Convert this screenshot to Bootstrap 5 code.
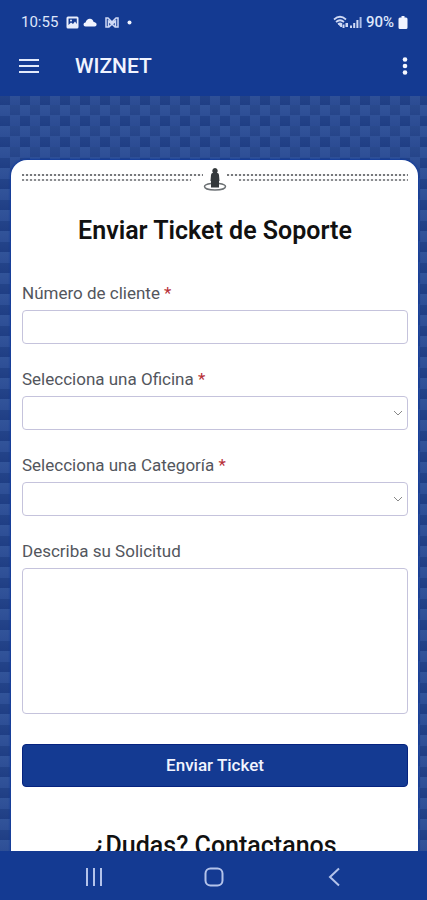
<!DOCTYPE html>
<html lang="es">
<head>
<meta charset="utf-8">
<meta name="viewport" content="width=device-width, initial-scale=1">
<title>WIZNET</title>
<link href="https://cdn.jsdelivr.net/npm/bootstrap@5.3.0/dist/css/bootstrap.min.css" rel="stylesheet">
<style>
  :root { --brand: #143a92; --line: #c5c3dc; }
  body { font-family: Roboto, "Liberation Sans", sans-serif; background: var(--brand); color: #111; }
  .status-bar { height: 44px; font-size: 15px; color: #dfe6fa; padding: 0 19px 0 21px; }
  .app-bar { height: 52px; padding: 0 19px 8px; }
  .app-title { font-size: 21px; line-height: 28px; font-weight: 500; color: #f1f4ff; }
  .weave {
    background-color: #26458f;
    background-image:
      linear-gradient(rgba(70, 110, 175, .14), rgba(10, 40, 120, .14)),
      conic-gradient(#254488 25%, #315297 0 50%, #234287 0 75%, #2f4f96 0);
    background-size: 100% 21px, 20px 21px;
    background-position: 0 9px, 0 9px;
    padding: 64px 9px 0 11px;
  }
  .panel { border-radius: 16px 16px 0 0; box-shadow: 0 0 2px 1px #123c9c; padding: 8px 10px 0 11px; }
  .divider-art { height: 24px; }
  .dots {
    height: 7px; margin-top: 6px;
    background:
      repeating-linear-gradient(90deg, #77797c 0 2px, #f2f2f3 2px 4px) 0 0 / 100% 2px no-repeat,
      repeating-linear-gradient(90deg, #8b8d90 0 2px, #f2f2f3 2px 4px) left bottom / calc(100% - 12px) 2px no-repeat;
  }
  .dots-end { background-position: 0 0, right bottom; }
  .panel-title { font-size: 25px; line-height: 32px; font-weight: 600; margin: 23px 0 34px; }
  .contact-title { font-size: 25px; line-height: 32px; font-weight: 500; margin: 43px 0 0; }
  .field { margin-bottom: 23px; }
  .field-label { font-size: 17px; line-height: 24px; color: #53565d; margin-bottom: 5px; }
  .req { color: #b72f37; }
  .box { border: 1px solid var(--line); border-radius: 4px; height: 34px; }
  select.box {
    background-size: 10px 10px; background-position: right 4px center;
    background-image: url("data:image/svg+xml,%3csvg xmlns='http://www.w3.org/2000/svg' viewBox='0 0 10 10'%3e%3cpath fill='none' stroke='%23888' d='M1 3l4 4 4-4'/%3e%3c/svg%3e");
  }
  textarea.box { height: 146px; resize: none; }
  .send { height: 43px; margin-top: 30px; border-radius: 4px; border: 1px solid #06237f; background: var(--brand); color: #f1f4ff; font-size: 17px; font-weight: 500; }
  .send:hover { background: #06237f; color: #fff; }
  .system-nav { height: 49px; background: var(--brand); gap: 100px; padding-top: 3px; }
  .plain { background: none; border: 0; padding: 0; line-height: 1; }
</style>
</head>
<body>
<div class="d-flex flex-column vh-100 overflow-hidden">
  <div class="status-bar d-flex align-items-center justify-content-between flex-shrink-0">
    <div class="d-flex align-items-center gap-1">
      <span>10:55</span>
      <svg class="ms-1" width="13" height="13" viewBox="0 0 13 13"><path fill="#e8edfc" fill-rule="evenodd" d="M2 .5h9Q12.500.5 12.500 2v9q0 1.500-1.500 1.500H2Q.5 12.500.5 11V2Q.5.500 2 .500zM2.500 2.500V9l2.500-2.500 2 1.500 2-2.500 1.800 2.500V2.500z"/><circle cx="5" cy="4.500" r="1" fill="#e8edfc"/></svg>
      <svg width="14" height="9" viewBox="0 0 14 9"><path fill="#f1f4ff" d="M2.500 8.500a2 2 0 0 1 0-4Q4 .500 7 .800q3 .200 3.600 3.200 3 .500 3 2.500 0 2-2 2z"/></svg>
      <svg class="ms-1" width="14" height="11" viewBox="0 0 14 11"><path fill="none" stroke="#cfd9f5" stroke-width="1.500" d="M1 10V1h2l4 4 4-4h2v9h-2.500V4L7 7.500 3.500 4v6zM4 10l6-6M4 4l6 6"/></svg>
      <svg class="ms-1" width="5" height="5" viewBox="0 0 5 5"><circle cx="2.500" cy="2.500" r="2" fill="#f1f4ff"/></svg>
    </div>
    <div class="d-flex align-items-center">
      <svg width="17" height="14" viewBox="0 0 17 14"><g fill="none" stroke="#cfd9f5" stroke-width="1.700"><path d="M1 4.500q6-5.500 12 0M3 7q4-3.500 8 0"/><path d="M5 9.200q2-1.500 4 0"/></g><path fill="#cfd9f5" d="M5 9h4v3H7.500zM9.500 9.500h2V13h-2zM12.500 8H15v4h-2.500z"/></svg>
      <svg class="me-1" width="12" height="12" viewBox="0 0 12 12"><path fill="#cfd9f5" d="M0 9.500h2V12H0zM3.200 7h2v5h-2zM6.400 4h2v8h-2z"/><path fill="#a9bbe6" d="M9.600 1h2v11h-2z"/></svg>
      <span class="fw-medium">90%</span>
      <svg class="ms-1" width="10" height="13" viewBox="0 0 10 13"><path fill="#f1f4ff" d="M3.500 0h3v1.500H8q1.500 0 1.500 1.500v8.500q0 1.500-1.500 1.500H2Q.5 13 .5 11.500V3Q.5 1.500 2 1.500h1.500z"/></svg>
    </div>
  </div>

  <header class="app-bar d-flex align-items-center flex-shrink-0">
    <button type="button" class="plain" aria-label="Menú"><svg class="d-block" width="20" height="16" viewBox="0 0 20 16"><path stroke="#e3eafb" stroke-width="2" d="M0 2h20M0 8h20M0 14h20"/></svg></button>
    <h1 class="app-title mb-0 ms-4 ps-2 flex-grow-1"><span class="ps-1">WIZNET</span></h1>
    <button type="button" class="plain" aria-label="Más opciones"><svg class="d-block" width="6" height="18" viewBox="0 0 6 18"><g fill="#f5f7ff"><circle cx="3" cy="2.500" r="2.300"/><circle cx="3" cy="9" r="2.300"/><circle cx="3" cy="15.500" r="2.300"/></g></svg></button>
  </header>

  <main class="weave flex-grow-1 overflow-hidden d-flex flex-column">
    <form class="panel bg-white flex-grow-1">
      <div class="divider-art d-flex">
        <div class="dots flex-grow-1"></div>
        <svg width="24" height="24" viewBox="0 0 24 24"><path d="M8 15.500c-4 .5-6.500 1.500-6.500 3 0 2 4.500 3.500 10.500 3.500s10.500-1.500 10.500-3.500c0-1.500-2.500-2.500-6.500-3" fill="none" stroke="#6b7073" stroke-width="1.500"/><path fill="#34393c" d="M12 0a2.800 2.800 0 0 1 2 4.700q2 .5 2 2.300l.5 6H16v6.500H8V13h-.5L8 7q0-1.800 2-2.300A2.800 2.800 0 0 1 12 0z"/></svg>
        <div class="dots dots-end flex-grow-1"></div>
      </div>
      <h2 class="panel-title text-center">Enviar Ticket de Soporte</h2>
      <div class="field">
        <label class="field-label d-block" for="cliente">Número de cliente <span class="req">*</span></label>
        <input class="form-control box" id="cliente" type="text" required>
      </div>
      <div class="field">
        <label class="field-label d-block" for="oficina">Selecciona una Oficina <span class="req">*</span></label>
        <select class="form-select box" id="oficina" required><option value=""></option></select>
      </div>
      <div class="field">
        <label class="field-label d-block" for="categoria">Selecciona una Categoría <span class="req">*</span></label>
        <select class="form-select box" id="categoria" required><option value=""></option></select>
      </div>
      <label class="field-label d-block" for="solicitud">Describa su Solicitud</label>
      <textarea class="form-control box" id="solicitud"></textarea>
      <button type="submit" class="btn send w-100">Enviar Ticket</button>
      <h2 class="contact-title text-center">¿Dudas? Contactanos</h2>
    </form>
  </main>

  <nav class="system-nav d-flex align-items-center justify-content-center flex-shrink-0" aria-label="Sistema">
    <button type="button" class="plain" aria-label="Recientes"><svg class="d-block" width="20" height="20" viewBox="0 0 20 20"><path stroke="#b4c3ea" stroke-width="2" d="M3 1v18M10 1v18M17 1v18"/></svg></button>
    <button type="button" class="plain" aria-label="Inicio"><svg class="d-block" width="20" height="20" viewBox="0 0 20 20"><rect x="1.500" y="1.500" width="17" height="17" rx="5" fill="none" stroke="#b4c3ea" stroke-width="2"/></svg></button>
    <button type="button" class="plain" aria-label="Atrás"><svg class="d-block" width="20" height="20" viewBox="0 0 20 20"><path fill="none" stroke="#b4c3ea" stroke-width="2" d="M15 1.500L6 10l9 8.500"/></svg></button>
  </nav>
</div>
<script src="https://cdn.jsdelivr.net/npm/bootstrap@5.3.0/dist/js/bootstrap.bundle.min.js"></script>
</body>
</html>
